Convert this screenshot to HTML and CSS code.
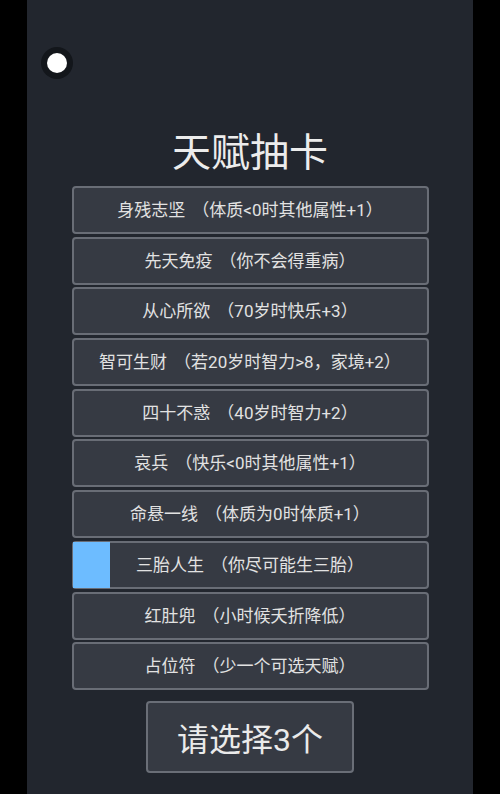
FILE: index.html
```html
<!DOCTYPE html>
<html>

<head>
    <meta charset="UTF-8">
    <title>天赋抽卡</title>
    <link rel="stylesheet" href="styles.css">
</head>

<body>
    <div id="page">
        <div class="top-bar">
            <div class="theme-toggle"><span></span></div>
        </div>
        <h1 class="title">天赋抽卡</h1>
        <ul id="talents">
            <li>身残志坚<span class="desc">（体质&lt;0时其他属性+1）</span></li>
            <li>先天免疫<span class="desc">（你不会得重病）</span></li>
            <li>从心所欲<span class="desc">（70岁时快乐+3）</span></li>
            <li>智可生财<span class="desc">（若20岁时智力&gt;8，家境+2）</span></li>
            <li>四十不惑<span class="desc">（40岁时智力+2）</span></li>
            <li>哀兵<span class="desc">（快乐&lt;0时其他属性+1）</span></li>
            <li>命悬一线<span class="desc">（体质为0时体质+1）</span></li>
            <li><i class="mark"></i>三胎人生<span class="desc">（你尽可能生三胎）</span></li>
            <li>红肚兜<span class="desc">（小时候夭折降低）</span></li>
            <li>占位符<span class="desc">（少一个可选天赋）</span></li>
        </ul>
        <button class="confirm">请选择3个</button>
    </div>
</body>

</html>
```
FILE: styles.css
```css
body,
ul,
li,
h1,
button {
    margin: 0;
    padding: 0;
}

ul {
    list-style: none;
}

body {
    background: #000;
    font-family: Roboto, "Noto Sans CJK SC", sans-serif;
}

#page {
    display: flex;
    flex-direction: column;
    align-items: center;
    width: 446px;
    height: 794px;
    margin-left: 27px;
    background: #22262e;
    color: #e6e6e6;
}

.top-bar {
    align-self: stretch;
    padding: 47px 0 0 14px;
}

.theme-toggle {
    display: flex;
    align-items: center;
    justify-content: center;
    width: 32px;
    height: 32px;
    border-radius: 50%;
    background: #13161b;
}

.theme-toggle span {
    width: 20px;
    height: 20px;
    border-radius: 50%;
    background: #fff;
}

.title {
    margin-top: 50px;
    font-size: 39px;
    line-height: 48px;
    font-weight: normal;
    color: #ececec;
}

#talents {
    display: flex;
    flex-direction: column;
    gap: 2.7px;
    margin-top: 9px;
}

#talents li {
    position: relative;
    box-sizing: border-box;
    width: 357px;
    height: 48px;
    border: 2px solid #696d76;
    border-radius: 4px;
    background: #363a43;
    text-align: center;
    line-height: 44px;
    font-size: 17px;
    color: #e2e2e2;
    cursor: pointer;
}

#talents .desc {
    margin-left: 7px;
}

#talents .mark {
    position: absolute;
    left: -1px;
    top: -1px;
    width: 37px;
    height: 46px;
    background: #6dbcff;
}

.confirm {
    box-sizing: border-box;
    width: 208px;
    height: 72px;
    margin-top: 11px;
    border: 2px solid #6a6e77;
    border-radius: 4px;
    background: #363a43;
    font-family: Roboto, "Noto Sans CJK SC", sans-serif;
    font-size: 32px;
    color: #eaeaea;
    cursor: pointer;
}
```
